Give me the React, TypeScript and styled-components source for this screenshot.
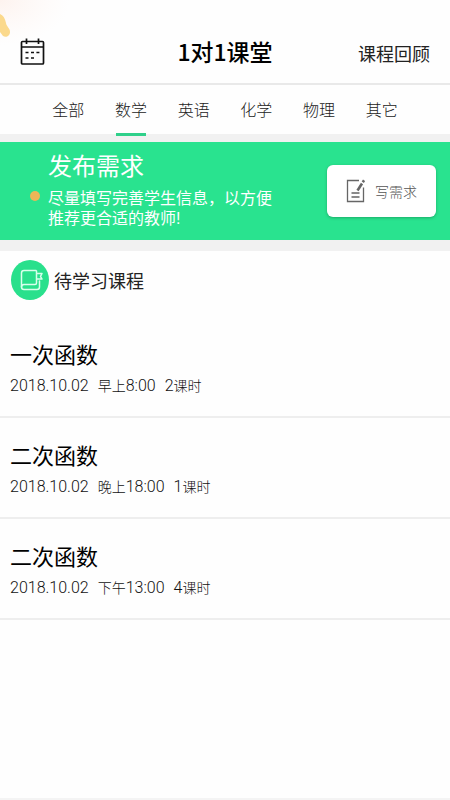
import React, { useState } from "react";
import styled, { createGlobalStyle } from "styled-components";

const GlobalStyle = createGlobalStyle`
  *, *::before, *::after { box-sizing: border-box; }
  body {
    margin: 0;
    background: #fefefe;
    color: #111;
    font-family: "Liberation Sans", "Noto Sans CJK SC", sans-serif;
  }
  h1, h2, h3, p, ul { margin: 0; padding: 0; }
  button { border: 0; padding: 0; background: none; font: inherit; color: inherit; cursor: pointer; }
`;

const Page = styled.div`
  position: relative;
  min-height: 100vh;
  border-bottom: 2px solid #f4f4f4;
`;

const Decoration = styled.svg`
  position: absolute;
  top: 0;
  left: 0;
  pointer-events: none;
`;

const Header = styled.header`
  display: grid;
  grid-template-columns: 1fr auto 1fr;
  align-items: center;
  height: 85px;
  padding: 20px 20px 0;
  border-bottom: 2px solid #e9e9e9;
`;

const CalendarButton = styled.button`
  justify-self: start;
  display: flex;
`;

const Title = styled.h1`
  padding-bottom: 2px;
  font-family: "Noto Sans CJK SC", sans-serif;
  font-size: 23px;
  line-height: 32px;
  font-weight: 500;
  color: #000;
`;

const ReviewLink = styled.a`
  justify-self: end;
  padding-top: 6px;
  font-size: 18px;
  line-height: 24px;
  color: #222;
  text-decoration: none;
`;

const Tabs = styled.nav`
  display: flex;
  height: 49px;
  padding: 0 37px;
`;

const Tab = styled.button<{ $active: boolean }>`
  position: relative;
  flex: 1;
  padding-top: 2px;
  font-size: 16px;
  line-height: 24px;
  font-weight: 300;
  color: #222;

  &::after {
    content: "";
    display: ${(p) => (p.$active ? "block" : "none")};
    position: absolute;
    left: 50%;
    bottom: -2px;
    width: 30px;
    height: 3px;
    margin-left: -15px;
    background: #2fd08a;
  }
`;

const Banner = styled.section`
  display: flex;
  align-items: center;
  justify-content: space-between;
  padding: 11px 14px 11px 30px;
  background: #29e38f;
  color: #fff;
  border-top: 8px solid #f1f1f1;
  border-bottom: 11px solid #f1f1f1;
`;

const BannerText = styled.div`
  display: grid;
  grid-template-columns: 10px auto;
  column-gap: 8px;
`;

const BannerTitle = styled.h2`
  grid-column: 2;
  font-size: 24px;
  line-height: 28px;
  font-weight: 400;
`;

const Dot = styled.span`
  width: 10px;
  height: 10px;
  margin-top: 10px;
  border-radius: 50%;
  background: #ecb657;
`;

const BannerNote = styled.p`
  padding-top: 8px;
  font-size: 16px;
  line-height: 20px;
  font-weight: 400;
`;

const WriteButton = styled.button`
  display: flex;
  align-items: center;
  justify-content: center;
  gap: 10px;
  flex: none;
  width: 109px;
  height: 52px;
  border-radius: 6px;
  background: #fff;
  box-shadow: 0 1px 3px rgba(0, 70, 35, 0.35);
  color: #555;
  font-size: 14px;
  font-weight: 300;
`;

const SectionHead = styled.div`
  display: flex;
  align-items: center;
  gap: 5px;
  padding: 9px 11px 17px;
`;

const SectionTitle = styled.h2`
  padding-top: 3px;
  font-size: 18px;
  line-height: 24px;
  font-weight: 400;
  color: #222;
`;

const CourseList = styled.ul`
  list-style: none;
`;

const Course = styled.li`
  height: 101px;
  padding: 24px 10px 0;
  border-bottom: 2px solid #eee;
`;

const CourseName = styled.h3`
  font-size: 22px;
  line-height: 30px;
  font-weight: 400;
  color: #000;
`;

const CourseMeta = styled.p`
  display: flex;
  align-items: baseline;
  gap: 9px;
  padding-top: 3px;
  font-size: 14px;
  line-height: 24px;
  font-weight: 300;
  color: #111;
`;

const Num = styled.span`
  font-family: Roboto, "Liberation Sans", sans-serif;
  font-size: 16px;
`;

const tabs = ["全部", "数学", "英语", "化学", "物理", "其它"];

const courses = [
  { name: "一次函数", date: "2018.10.02", period: "早上", time: "8:00", hours: "2" },
  { name: "二次函数", date: "2018.10.02", period: "晚上", time: "18:00", hours: "1" },
  { name: "二次函数", date: "2018.10.02", period: "下午", time: "13:00", hours: "4" },
];

const CalendarIcon = () => (
  <svg width="25" height="28" viewBox="0 0 25 28" fill="none" stroke="#111" strokeWidth="1.7" aria-hidden="true">
    <rect x="1.500" y="3.500" width="22" height="22.500" rx="1" />
    <path d="M1.500 9h22M6.500 0.500v5.500M18.500 0.500v5.500" />
    <path d="M5.500 14.500h3M11 14.500h3M16.400 14.500h3M5.500 20h3M11 20h3" />
  </svg>
);

const NoteIcon = () => (
  <svg width="19" height="24" viewBox="0 0 19 24" fill="none" stroke="#666" strokeWidth="1.3" aria-hidden="true">
    <path d="M13 1.500H1.500v21h16V8.500" />
    <path d="M5.500 14h8M5.500 18h8" />
    <path d="M11.500 11.500l4.500-7" strokeWidth="2.6" />
    <path d="M16.800 3.300l1.300-2" strokeWidth="2.6" />
  </svg>
);

const BookBadge = () => (
  <svg width="38" height="40" viewBox="0 0 38 40" fill="none" aria-hidden="true">
    <ellipse cx="19" cy="20" rx="19" ry="20" fill="#29e08c" />
    <g stroke="#d9ffec" strokeWidth="1.5" strokeLinejoin="round" strokeLinecap="round">
      <path d="M25 10.500H13q-2.500 0-2.500 2.500V27q0 2.500 2.500 2.500H26q2.500 0 2.500-2.500V21" />
      <path d="M10.500 27q0-2.500 2.500-2.500H24q1.500 0 1.500-1.500V11" />
      <path d="M26 13.500h5l-1.500 2.800 1.500 2.800h-5" />
    </g>
  </svg>
);

export default function App() {
  const [active, setActive] = useState("数学");

  return (
    <>
      <GlobalStyle />
      <Page>
        <Decoration width="70" height="50" viewBox="0 0 70 50" aria-hidden="true">
          <defs>
            <radialGradient id="blush" cx="0" cy="0" r="1">
              <stop offset="0" stopColor="#fdeee8" stopOpacity="0.7" />
              <stop offset="1" stopColor="#fef4f0" stopOpacity="0" />
            </radialGradient>
          </defs>
          <rect width="70" height="45" fill="url(#blush)" />
          <path d="M0 14C3 15 5 18 6 23C6 26 10 28 10 32C10 36 6 38 3 36L0 32Z" fill="#fbd98c" />
        </Decoration>
        <Header>
          <CalendarButton type="button" aria-label="日历">
            <CalendarIcon />
          </CalendarButton>
          <Title>1对1课堂</Title>
          <ReviewLink href="#review">课程回顾</ReviewLink>
        </Header>
        <Tabs>
          {tabs.map((t) => (
            <Tab key={t} type="button" $active={t === active} onClick={() => setActive(t)}>
              {t}
            </Tab>
          ))}
        </Tabs>
        <Banner>
          <BannerText>
            <BannerTitle>发布需求</BannerTitle>
            <Dot />
            <BannerNote>
              尽量填写完善学生信息，以方便
              <br />
              推荐更合适的教师!
            </BannerNote>
          </BannerText>
          <WriteButton type="button">
            <NoteIcon />
            写需求
          </WriteButton>
        </Banner>
        <SectionHead>
          <BookBadge />
          <SectionTitle>待学习课程</SectionTitle>
        </SectionHead>
        <CourseList>
          {courses.map((c, i) => (
            <Course key={i}>
              <CourseName>{c.name}</CourseName>
              <CourseMeta>
                <Num>{c.date}</Num>
                <span>
                  {c.period}
                  <Num>{c.time}</Num>
                </span>
                <span>
                  <Num>{c.hours}</Num>课时
                </span>
              </CourseMeta>
            </Course>
          ))}
        </CourseList>
      </Page>
    </>
  );
}
